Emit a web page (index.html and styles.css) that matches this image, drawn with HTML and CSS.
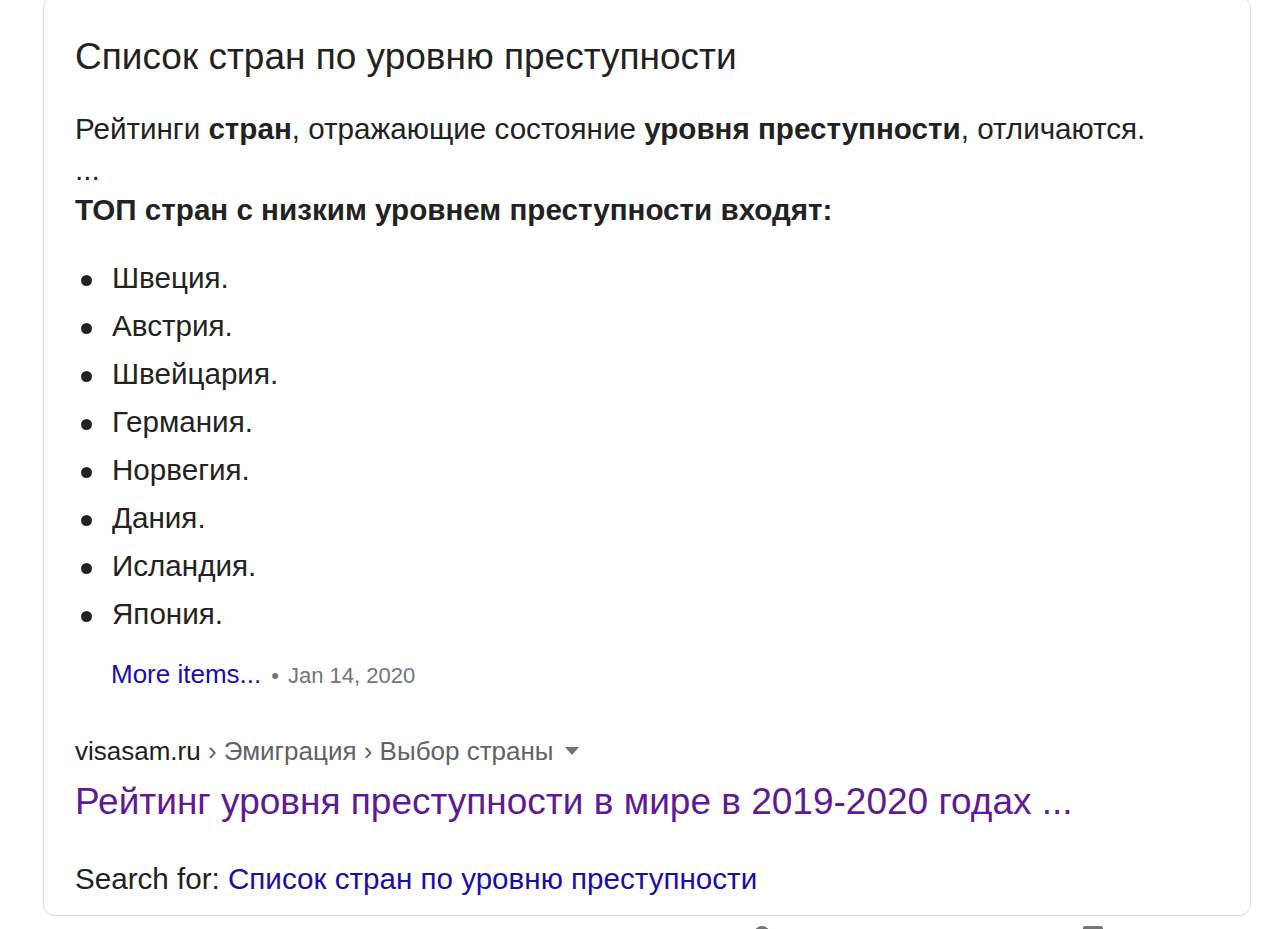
FILE: index.html
```html
<!DOCTYPE html>
<html lang="ru">
<head>
<meta charset="utf-8">
<title>Список стран по уровню преступности</title>
<link rel="stylesheet" href="styles.css">
</head>
<body>
<div class="page">
  <div class="card">
    <h2 class="snip-title">Список стран по уровню преступности</h2>
    <p class="snip-text">Рейтинги <b>стран</b>, отражающие состояние <b>уровня преступности</b>, отличаются.<br>...<br><b>ТОП стран с низким уровнем преступности входят:</b></p>
    <ul class="snip-list">
      <li>Швеция.</li>
      <li>Австрия.</li>
      <li>Швейцария.</li>
      <li>Германия.</li>
      <li>Норвегия.</li>
      <li>Дания.</li>
      <li>Исландия.</li>
      <li>Япония.</li>
    </ul>
    <div class="more"><a class="more-link" href="#">More items...</a><span class="dot">•</span><span class="date">Jan 14, 2020</span></div>
    <div class="crumbs"><span class="host">visasam.ru</span><span class="path"> › Эмиграция › Выбор страны</span><span class="caret"></span></div>
    <a class="result-title" href="#">Рейтинг уровня преступности в мире в 2019-2020 годах ...</a>
    <div class="search-for">Search for: <a class="search-link" href="#">Список стран по уровню преступности</a></div>
  </div>
  <div class="below">
    <span class="icon-circle"></span>
    <span class="icon-rect"></span>
  </div>
</div>
</body>
</html>
```

FILE: styles.css
```css
html, body {
  margin: 0;
  padding: 0;
  background: #ffffff;
}

body {
  font-family: "Liberation Sans", Arial, sans-serif;
  color: #222222;
  overflow: hidden;
  height: 929px;
}

.page {
  padding-left: 43px;
  width: 1208px;
}

.card {
  margin-top: -4px;
  border: 1px solid #dadce0;
  border-radius: 12px;
  padding: 40px 32px 16px 31px;
  box-shadow: 0 1px 2px rgba(0, 0, 0, 0.04);
}

.snip-title {
  margin: 0;
  font-size: 37px;
  line-height: 40px;
  font-weight: normal;
  color: #222222;
}

.snip-text {
  margin: 32px 0 0 0;
  font-size: 29.6px;
  line-height: 40.5px;
  color: #222222;
}

.snip-text b {
  font-weight: bold;
}

.snip-list {
  margin: 23px 0 0 0;
  padding: 0 0 0 37px;
  list-style: none;
}

.snip-list li {
  position: relative;
  font-size: 29.6px;
  line-height: 48px;
  color: #222222;
}

.snip-list li::before {
  content: "";
  position: absolute;
  left: -31px;
  top: 21px;
  width: 11px;
  height: 11px;
  border-radius: 50%;
  background: #222222;
}

.more {
  margin-top: 16px;
  padding-left: 36px;
  font-size: 26px;
  line-height: 40px;
}

.more-link {
  color: #1a0dab;
  text-decoration: none;
}

.dot {
  color: #70757a;
  font-size: 22px;
  margin: 0 9px 0 10px;
}

.date {
  color: #70757a;
  font-size: 22px;
}

.crumbs {
  margin-top: 35px;
  font-size: 26px;
  line-height: 40px;
  display: flex;
  align-items: center;
}

.host {
  color: #202124;
}

.path {
  color: #5f6368;
  white-space: pre;
}

.caret {
  margin-left: 11px;
  width: 0;
  height: 0;
  border-left: 7px solid transparent;
  border-right: 7px solid transparent;
  border-top: 8px solid #70757a;
  margin-top: 1px;
}

.result-title {
  display: block;
  margin-top: 11px;
  font-size: 37px;
  line-height: 40px;
  color: #5e1a97;
  text-decoration: none;
}

.search-for {
  margin-top: 37px;
  font-size: 29.6px;
  line-height: 40px;
  color: #222222;
}

.search-link {
  color: #1a0dab;
  text-decoration: none;
}

.below {
  display: flex;
  padding-left: 711px;
  margin-top: 10px;
}

.icon-circle {
  width: 16px;
  height: 16px;
  border-radius: 50%;
  background: #757575;
}

.icon-rect {
  margin-left: 313px;
  width: 20px;
  height: 16px;
  border-radius: 2px;
  background: #757575;
}
```
